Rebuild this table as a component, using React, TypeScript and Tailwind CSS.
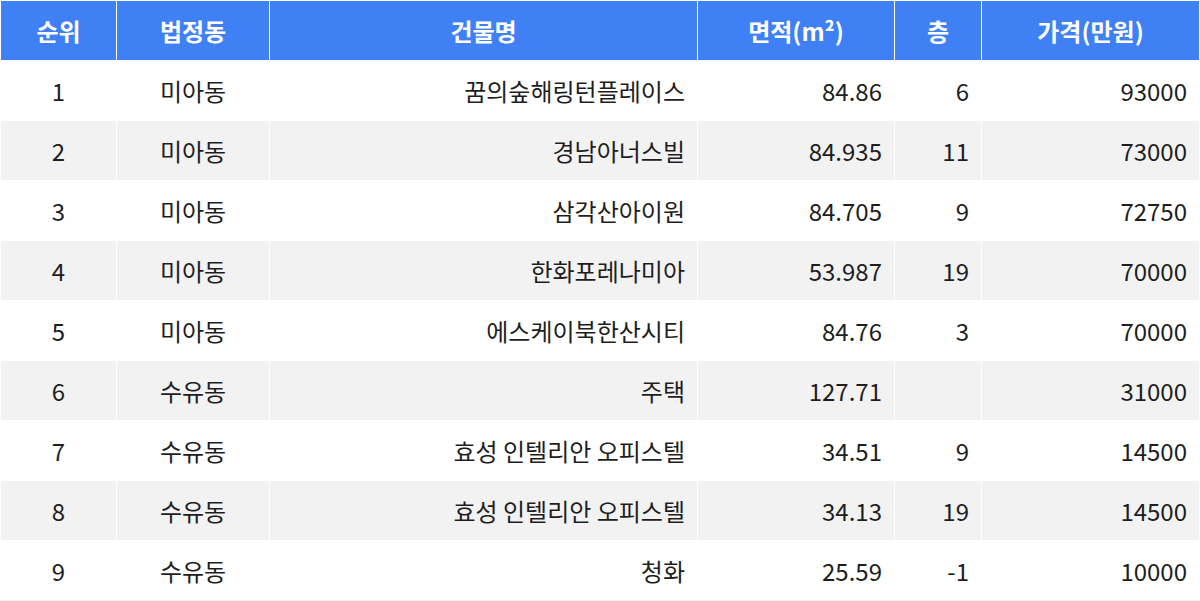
const rows = [
  { rank: 1, dong: "미아동", name: "꿈의숲해링턴플레이스", area: "84.86", floor: "6", price: "93000" },
  { rank: 2, dong: "미아동", name: "경남아너스빌", area: "84.935", floor: "11", price: "73000" },
  { rank: 3, dong: "미아동", name: "삼각산아이원", area: "84.705", floor: "9", price: "72750" },
  { rank: 4, dong: "미아동", name: "한화포레나미아", area: "53.987", floor: "19", price: "70000" },
  { rank: 5, dong: "미아동", name: "에스케이북한산시티", area: "84.76", floor: "3", price: "70000" },
  { rank: 6, dong: "수유동", name: "주택", area: "127.71", floor: "", price: "31000" },
  { rank: 7, dong: "수유동", name: "효성 인텔리안 오피스텔", area: "34.51", floor: "9", price: "14500" },
  { rank: 8, dong: "수유동", name: "효성 인텔리안 오피스텔", area: "34.13", floor: "19", price: "14500" },
  { rank: 9, dong: "수유동", name: "청화", area: "25.59", floor: "-1", price: "10000" },
];

const headers = ["순위", "법정동", "건물명", "면적(m²)", "층", "가격(만원)"];

export default function App() {
  return (
    <div
      className="w-[1200px] h-[601px] bg-white px-px pt-px border-b border-[#f0f0f0] text-[24px] text-[#1e1e1e]"
      style={{ fontFamily: '"Noto Sans CJK KR", "Noto Sans", sans-serif' }}
    >
      <div className="grid grid-cols-[115px_152px_427px_196px_86px_217px] auto-rows-[59px] gap-px bg-white">
        {headers.map((h) => (
          <div key={h} className="flex items-center justify-center bg-[#4080f5] font-bold text-white">
            {h}
          </div>
        ))}
        {rows.map((r, i) => {
          const bg = i % 2 === 1 ? "bg-[#f2f2f2]" : "bg-white";
          return [
            <div key={`${r.rank}-a`} className={`flex items-center justify-center ${bg}`}>{r.rank}</div>,
            <div key={`${r.rank}-b`} className={`flex items-center justify-center ${bg}`}>{r.dong}</div>,
            <div key={`${r.rank}-c`} className={`flex items-center justify-end pr-3 ${bg}`}>{r.name}</div>,
            <div key={`${r.rank}-d`} className={`flex items-center justify-end pr-3 ${bg}`}>{r.area}</div>,
            <div key={`${r.rank}-e`} className={`flex items-center justify-end pr-3 ${bg}`}>{r.floor}</div>,
            <div key={`${r.rank}-f`} className={`flex items-center justify-end pr-3 ${bg}`}>{r.price}</div>,
          ];
        })}
      </div>
    </div>
  );
}
